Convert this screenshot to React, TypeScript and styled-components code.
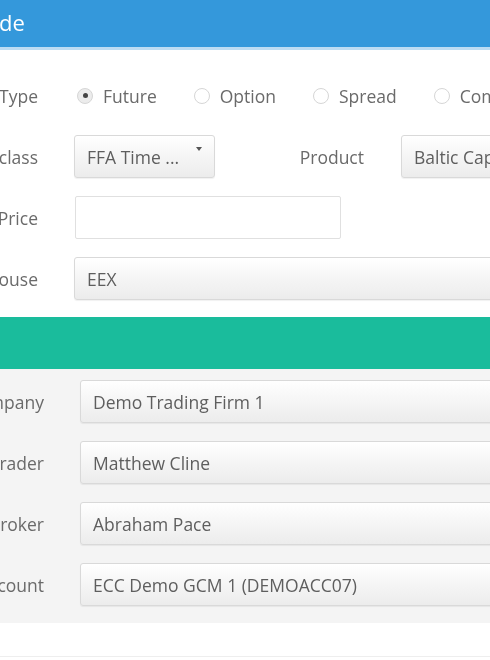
import React from "react";
import styled, { createGlobalStyle } from "styled-components";

const Global = createGlobalStyle`
  html, body { margin: 0; padding: 0; background: #fff; }
  body { font-family: "Open Sans", "Liberation Sans", sans-serif; }
  * { box-sizing: border-box; }
`;

const Page = styled.div`
  width: 490px;
  height: 660px;
  overflow: hidden;
  background: #fff;
  filter: blur(0.6px);
`;

const Panel = styled.div`
  margin-left: -120px;
  width: 780px;
`;

const Header = styled.div`
  height: 50px;
  background: #3498db;
  border-bottom: 3px solid #bcdcf3;
  padding-left: 34px;
  display: flex;
  align-items: center;
  padding-bottom: 4px;
`;

const Title = styled.h1`
  margin: 0;
  font-size: 22px;
  font-weight: 400;
  color: #fff;
  line-height: 26px;
`;

const Form = styled.div<{ $bg: string; $pt: number; $pb: number }>`
  background: ${(p) => p.$bg};
  padding: ${(p) => p.$pt}px 0 ${(p) => p.$pb}px;
  display: flex;
  flex-direction: column;
  gap: 18px;
`;

const Row = styled.div<{ $label: number }>`
  display: grid;
  grid-template-columns: ${(p) => p.$label}px 1fr;
  column-gap: 36px;
  align-items: center;
  height: 43px;
`;

const Label = styled.div`
  text-align: right;
  font-size: 17.5px;
  color: #6a6a6a;
  white-space: nowrap;
`;

const Fields = styled.div`
  display: flex;
  align-items: center;
  height: 100%;
`;

const RadioGroup = styled.div`
  display: flex;
  align-items: center;
  gap: 37px;
  padding-left: 3px;
`;

const RadioOption = styled.label`
  display: flex;
  align-items: center;
  gap: 10px;
  font-size: 17.5px;
  color: #6a6a6a;
  white-space: nowrap;
`;

const RadioCircle = styled.span<{ $checked?: boolean }>`
  width: 16px;
  height: 16px;
  border-radius: 50%;
  border: 1px solid #d6d6d6;
  background: ${(p) => (p.$checked ? "#ececec" : "#fff")};
  display: flex;
  align-items: center;
  justify-content: center;
  &::after {
    content: "";
    width: 5px;
    height: 5px;
    border-radius: 50%;
    background: ${(p) => (p.$checked ? "#444" : "transparent")};
  }
`;

const Select = styled.div<{ $w?: number }>`
  height: 43px;
  ${(p) => (p.$w ? `width: ${p.$w}px; flex: none;` : "flex: 1;")}
  border: 1px solid #d9d9d9;
  border-radius: 3px;
  background: linear-gradient(to bottom, #ffffff 0%, #f7f7f7 40%, #ececec 100%);
  box-shadow: 0 1px 1px rgba(0, 0, 0, 0.06);
  display: flex;
  align-items: center;
  padding: 0 12px;
  font-size: 17.5px;
  color: #5e5e5e;
  white-space: nowrap;
  overflow: hidden;
`;

const Caret = styled.span`
  margin-left: auto;
  align-self: flex-start;
  margin-top: 11px;
  width: 0;
  height: 0;
  border-left: 3px solid transparent;
  border-right: 3px solid transparent;
  border-top: 4px solid #555;
`;

const Input = styled.div`
  width: 266px;
  height: 43px;
  border: 1px solid #e0e0e0;
  border-radius: 2px;
  background: #fff;
  margin-left: 1px;
`;

const InlineLabel = styled(Label)`
  width: 149px;
  margin-right: 37px;
`;

const GreenBar = styled.div`
  height: 52px;
  background: #1abc9c;
`;

const Footer = styled.div`
  height: 34px;
  border-bottom: 1px solid #eeeeee;
`;

export default function App() {
  const opts = ["Future", "Option", "Spread", "Combo"];
  return (
    <>
      <Global />
      <Page>
        <Panel>
          <Header>
            <Title>New Trade</Title>
          </Header>
          <Form $bg="#fff" $pt={24} $pb={17}>
            <Row $label={158}>
              <Label>Trade Type</Label>
              <RadioGroup>
                {opts.map((o, i) => (
                  <RadioOption key={o}>
                    <RadioCircle $checked={i === 0} />
                    {o}
                  </RadioOption>
                ))}
              </RadioGroup>
            </Row>
            <Row $label={158}>
              <Label>Subclass</Label>
              <Fields>
                <Select $w={141}>
                  FFA Time ...
                  <Caret />
                </Select>
                <InlineLabel>Product</InlineLabel>
                <Select>Baltic Capesize</Select>
              </Fields>
            </Row>
            <Row $label={158}>
              <Label>Price</Label>
              <Fields>
                <Input />
              </Fields>
            </Row>
            <Row $label={158}>
              <Label>Clearing House</Label>
              <Select>EEX</Select>
            </Row>
          </Form>
          <GreenBar />
          <Form $bg="#f4f4f4" $pt={11} $pb={17}>
            <Row $label={164}>
              <Label>Company</Label>
              <Select>Demo Trading Firm 1</Select>
            </Row>
            <Row $label={164}>
              <Label>Trader</Label>
              <Select>Matthew Cline</Select>
            </Row>
            <Row $label={164}>
              <Label>Broker</Label>
              <Select>Abraham Pace</Select>
            </Row>
            <Row $label={164}>
              <Label>Account</Label>
              <Select>ECC Demo GCM 1 (DEMOACC07)</Select>
            </Row>
          </Form>
          <Footer />
        </Panel>
      </Page>
    </>
  );
}
